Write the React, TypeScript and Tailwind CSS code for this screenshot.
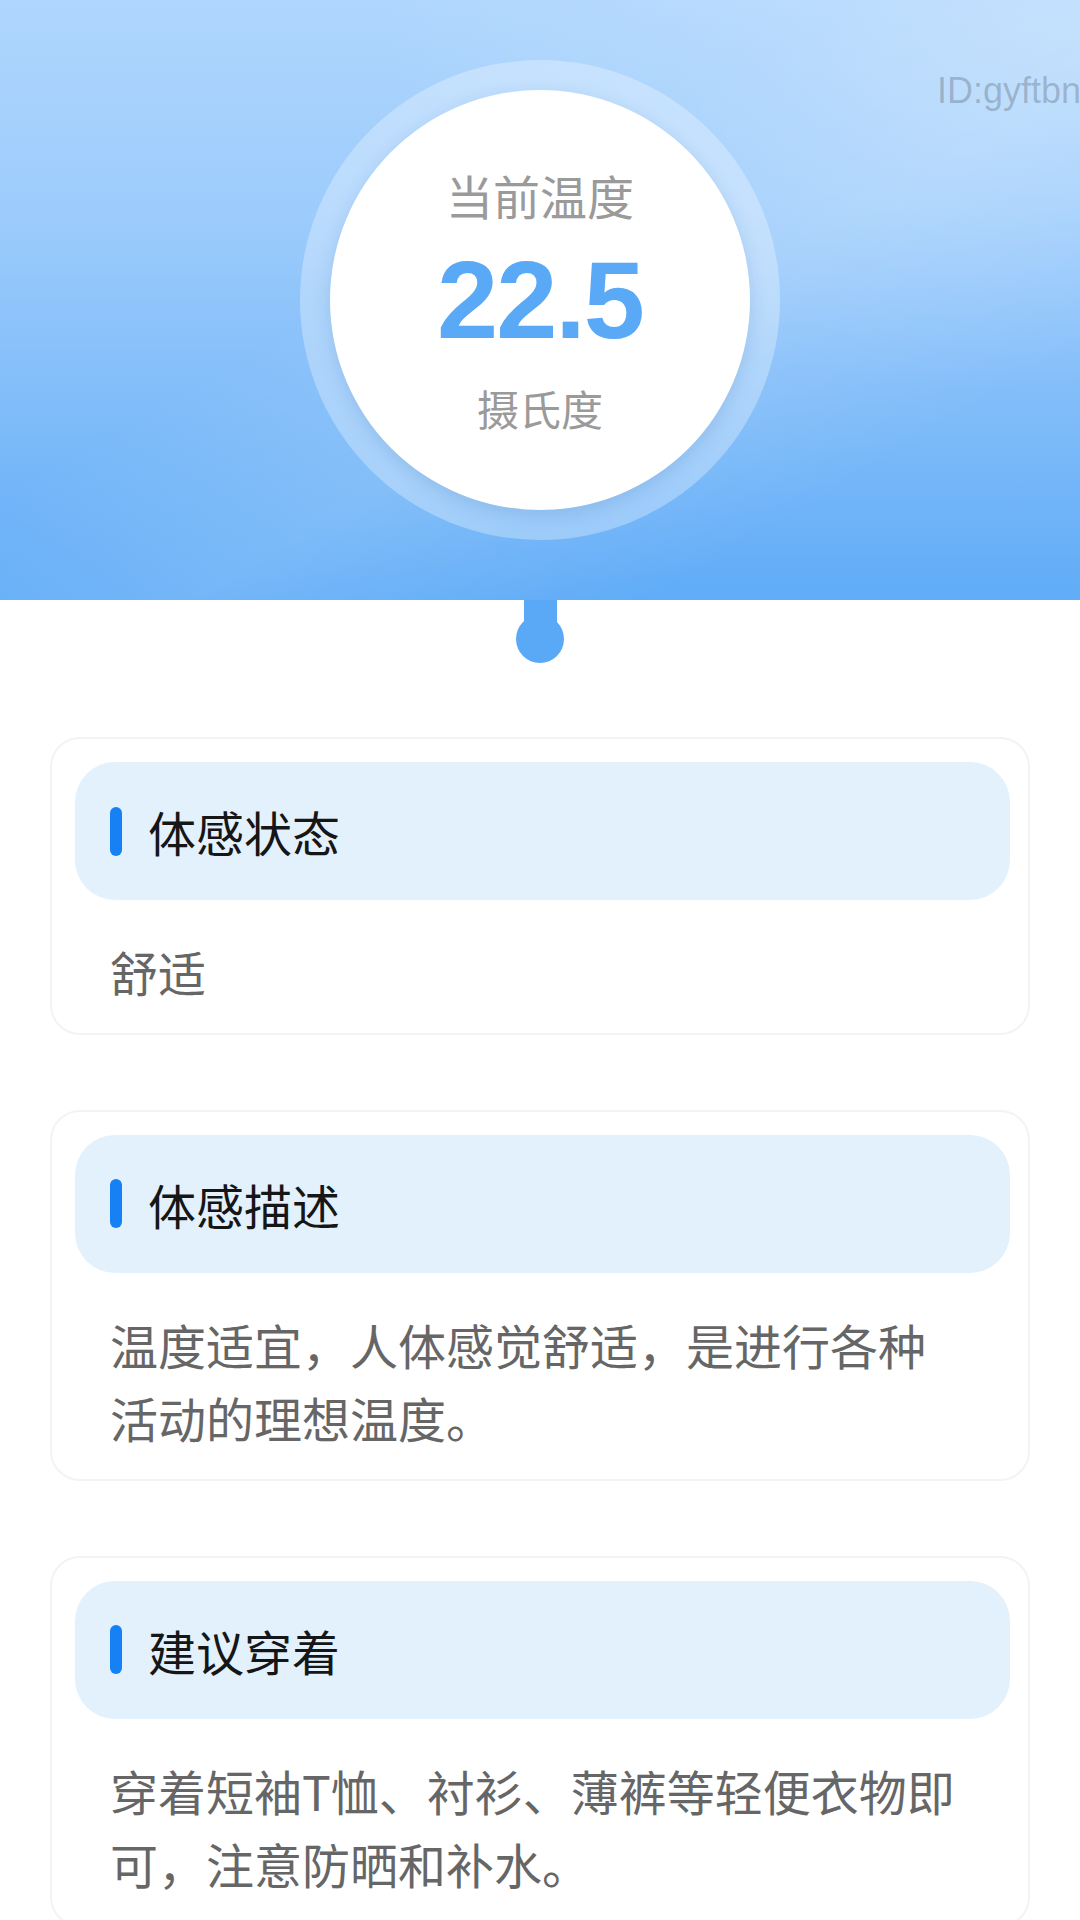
import React from "react";

const sections = [
  { title: "体感状态", body: "舒适" },
  { title: "体感描述", body: "温度适宜，人体感觉舒适，是进行各种活动的理想温度。" },
  { title: "建议穿着", body: "穿着短袖T恤、衬衫、薄裤等轻便衣物即可，注意防晒和补水。" },
];

const cjk = "font-['Noto_Sans_CJK_SC','Noto_Sans',sans-serif]";

export default function App() {
  return (
    <div className={`min-h-[1920px] w-[1080px] overflow-hidden bg-white ${cjk}`}>
      {/* Header */}
      <div className="relative h-[600px] overflow-hidden bg-[linear-gradient(180deg,#afd6fd_0%,#9dccfc_35%,#80bcf9_68%,#60acf7_100%)]">
        <div className="absolute inset-0 bg-[linear-gradient(150deg,transparent_40%,rgba(255,255,255,0.12)_58%,transparent_80%)]" />
        <div className="absolute inset-0 bg-[radial-gradient(ellipse_at_95%_5%,rgba(255,255,255,0.22),transparent_45%)]" />
        <div className="absolute left-[937px] top-[64px] whitespace-nowrap font-['Liberation_Sans',sans-serif] text-[36px] text-black/20">
          ID:gyftbn
        </div>

        <div className="relative flex justify-center pt-[60px]">
          <div className="flex h-[480px] w-[480px] items-center justify-center rounded-full bg-white/30">
            <div className="flex h-[420px] w-[420px] flex-col items-center justify-center rounded-full bg-white shadow-[0_6px_18px_rgba(30,100,180,0.18)]">
              <div className="text-[47px] leading-none text-[#9a9a9a]">当前温度</div>
              <div className="mt-[26px] font-['Liberation_Sans',sans-serif] text-[110px] font-bold leading-[112px] tracking-[-2px] text-[#5aa9f6]">
                22.5
              </div>
              <div className="mt-[31px] text-[42px] leading-none text-[#9a9a9a]">摄氏度</div>
            </div>
          </div>
        </div>
      </div>

      {/* Pin */}
      <div className="flex flex-col items-center">
        <div className="h-[39px] w-[33px] bg-[#5aa9f6]" />
        <div className="-mt-[24px] h-[48px] w-[48px] rounded-full bg-[#5aa9f6]" />
      </div>

      {/* Cards */}
      <div className="mx-[50px] mt-[74px] flex flex-col gap-[75px]">
        {sections.map((s) => (
          <div
            key={s.title}
            className="rounded-[30px] border-2 border-[#f3f3f3] bg-white pb-[24px] pl-[23px] pr-[18px] pt-[23px]"
          >
            <div className="flex h-[138px] items-center rounded-[40px] bg-[#e3f1fd] pl-[35px]">
              <span className="h-[49px] w-[12px] rounded-full bg-[#1681f5]" />
              <span className="ml-[26px] text-[48px] leading-none text-[#161616]">{s.title}</span>
            </div>
            <p className="mt-[35px] pl-[35px] pr-[45px] text-[48px] leading-[73.5px] text-[#666666]">{s.body}</p>
          </div>
        ))}
      </div>
    </div>
  );
}
